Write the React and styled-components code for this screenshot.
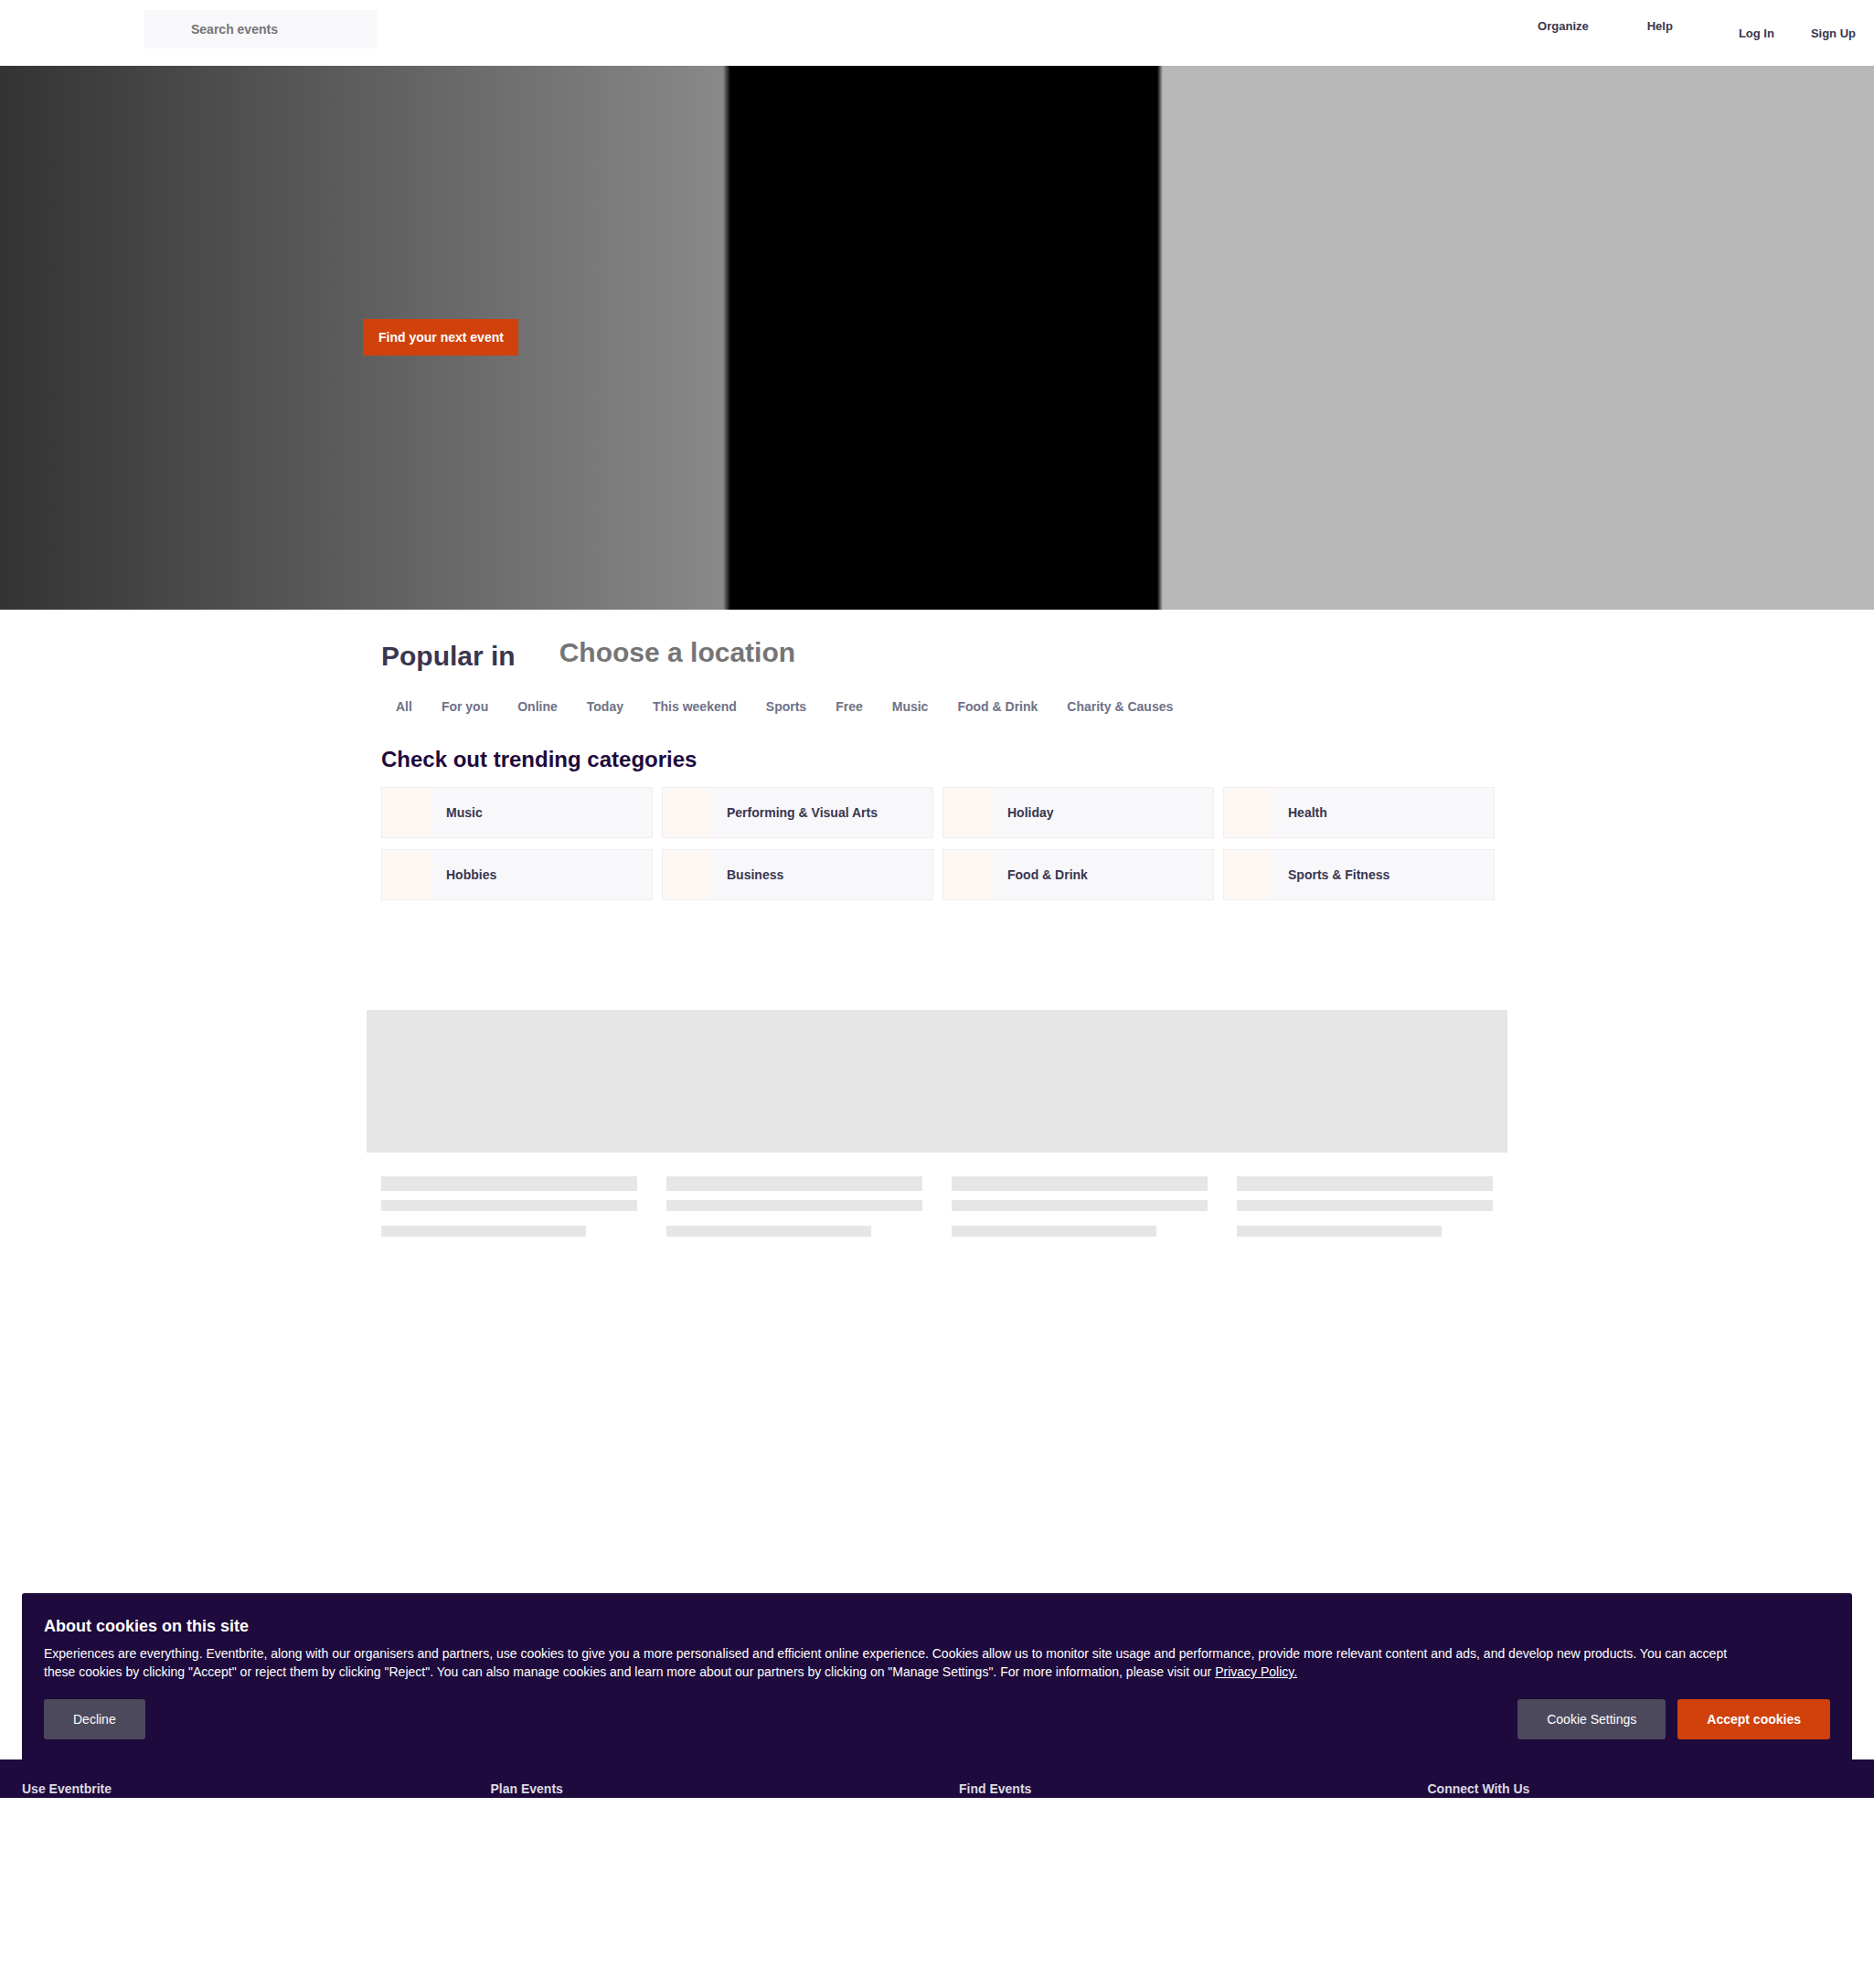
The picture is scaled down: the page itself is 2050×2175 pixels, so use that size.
import React from "react";
import styled, { createGlobalStyle } from "styled-components";

const GlobalStyle = createGlobalStyle`
  *, *::before, *::after { box-sizing: border-box; }
  body {
    margin: 0;
    background: #fff;
    color: #39364f;
    font-family: "Liberation Sans", Arial, sans-serif;
    font-size: 14px;
    line-height: 20px;
  }
  h1, h2, h3, p, ul { margin: 0; padding: 0; }
  ul { list-style: none; }
  a { color: inherit; text-decoration: none; }
  button, input { font: inherit; color: inherit; border: 0; border-radius: 0; }
`;

const Header = styled.header`
  display: flex;
  justify-content: space-between;
  align-items: flex-start;
  height: 72px;
  padding: 11px 20px 0 158px;
`;

const SearchInput = styled.input`
  width: 254px;
  height: 42px;
  padding: 0 16px 0 51px;
  background: #f8f7fa;
  font-weight: 700;
  &::placeholder { color: #757575; opacity: 1; }
`;

const Nav = styled.nav`
  display: flex;
  font-size: 13px;
  font-weight: 700;
`;

const NavGroup = styled.ul`
  display: flex;
  gap: ${(p) => p.$gap}px;
  && { padding: ${(p) => (p.$account ? "16px 0 0 72px" : "8px 0 0")}; }
`;

const Hero = styled.section`
  height: 595px;
  padding-top: 277px;
  background: linear-gradient(
    90deg,
    #333 0,
    #898989 791px,
    #000 799px,
    #000 1266px,
    #b8b8b8 1272px,
    #b8b8b8 100%
  );
`;

const Container = styled.div`
  width: 100%;
  max-width: 1248px;
  margin: 0 auto;
`;

const HeroInner = styled(Container)`
  max-width: 1256px;
`;

const HeroLink = styled.a`
  display: inline-flex;
  align-items: center;
  height: 40px;
  padding: 0 16px 0 17px;
  background: #d1410c;
  color: #fff;
  font-weight: 700;
`;

const Popular = styled(Container)`
  padding: 28px 14px 0 16px;
`;

const LocationRow = styled.div`
  display: flex;
  align-items: flex-start;
  gap: 48px;
  height: 56px;
  font-size: 30px;
  line-height: 38px;
  font-weight: 700;
`;

const LocationLabel = styled.label`
  padding-top: 4px;
`;

const LocationInput = styled.input`
  width: 320px;
  height: 38px;
  padding: 0;
  background: transparent;
  &::placeholder { color: #757575; opacity: 1; }
`;

const Tabs = styled.nav`
  display: flex;
  gap: 32px;
  padding: 12px 16px;
  color: #6f7287;
  font-weight: 700;
`;

const SectionTitle = styled.h2`
  && { margin-top: 20px; }
  color: #1e0a3c;
  font-size: 24px;
  line-height: 32px;
`;

const CategoryGrid = styled.div`
  display: grid;
  grid-template-columns: repeat(4, 1fr);
  gap: 12px 10px;
  margin-top: 14px;
`;

const CategoryCard = styled.a`
  display: flex;
  align-items: center;
  height: 56px;
  border: 1px solid #eeedf2;
  background: #f8f7fa;
  font-weight: 700;
`;

const CategoryThumb = styled.span`
  width: 54px;
  height: 100%;
  margin-right: 16px;
  background: #fef8f5;
`;

const Placeholder = styled(Container)`
  padding: 120px 0 390px;
`;

const Banner = styled.div`
  height: 156px;
  background: #e6e6e6;
`;

const SkeletonGrid = styled.div`
  display: grid;
  grid-template-columns: repeat(4, 1fr);
  margin-top: 26px;
`;

const SkeletonItem = styled.div`
  padding: 0 16px;
`;

const Bar = styled.div`
  width: ${(p) => (p.$short ? "80%" : "100%")};
  height: ${(p) => (p.$tall ? 16 : 12)}px;
  margin-top: ${(p) => p.$space || 0}px;
  background: #e6e6e6;
`;

const CookieBanner = styled.section`
  margin: 0 24px;
  padding: 24px 24px 22px;
  border-radius: 3px 3px 0 0;
  background: #1e0a3c;
  color: #fff;
`;

const CookieTitle = styled.h2`
  font-size: 18px;
  line-height: 24px;
`;

const CookieText = styled.p`
  max-width: 1860px;
  && { margin-top: 8px; }
`;

const PolicyLink = styled.a`
  && { text-decoration: underline; }
`;

const CookieActions = styled.div`
  display: flex;
  justify-content: space-between;
  margin-top: 20px;
`;

const ActionGroup = styled.div`
  display: flex;
  gap: 13px;
`;

const CookieButton = styled.button`
  height: 44px;
  padding: 0 32px;
  border-radius: 3px;
  background: ${(p) => (p.$primary ? "#d1410c" : "#4d495d")};
  color: #fff;
  font-weight: ${(p) => (p.$primary ? 700 : 400)};
`;

const Footer = styled.footer`
  display: grid;
  grid-template-columns: repeat(4, 1fr);
  height: 42px;
  padding-top: 22px;
  background: #1e0a3c;
  overflow: hidden;
`;

const FooterTitle = styled.h3`
  && { padding-left: 24px; }
  color: #dbdae3;
  font-size: 14px;
  line-height: 20px;
`;

const tabs = ["All", "For you", "Online", "Today", "This weekend", "Sports", "Free", "Music", "Food & Drink", "Charity & Causes"];
const categories = ["Music", "Performing & Visual Arts", "Holiday", "Health", "Hobbies", "Business", "Food & Drink", "Sports & Fitness"];
const footerTitles = ["Use Eventbrite", "Plan Events", "Find Events", "Connect With Us"];

export default function App() {
  return (
    <>
      <GlobalStyle />
      <Header>
        <SearchInput type="search" placeholder="Search events" aria-label="Search events" />
        <Nav>
          <NavGroup $gap={64}>
            <li><a href="#organize">Organize</a></li>
            <li><a href="#help">Help</a></li>
          </NavGroup>
          <NavGroup $gap={40} $account>
            <li><a href="#login">Log In</a></li>
            <li><a href="#signup">Sign Up</a></li>
          </NavGroup>
        </Nav>
      </Header>
      <main>
        <Hero>
          <HeroInner>
            <HeroLink href="#events">Find your next event</HeroLink>
          </HeroInner>
        </Hero>
        <Popular>
          <LocationRow>
            <LocationLabel htmlFor="location">Popular in</LocationLabel>
            <LocationInput id="location" type="text" placeholder="Choose a location" />
          </LocationRow>
          <Tabs>
            {tabs.map((t) => <a key={t} href="#events">{t}</a>)}
          </Tabs>
          <SectionTitle>Check out trending categories</SectionTitle>
          <CategoryGrid>
            {categories.map((c) => (
              <CategoryCard key={c} href="#category">
                <CategoryThumb />
                {c}
              </CategoryCard>
            ))}
          </CategoryGrid>
        </Popular>
        <Placeholder>
          <Banner />
          <SkeletonGrid>
            {[0, 1, 2, 3].map((i) => (
              <SkeletonItem key={i}>
                <Bar $tall />
                <Bar $space={10} />
                <Bar $space={16} $short />
              </SkeletonItem>
            ))}
          </SkeletonGrid>
        </Placeholder>
      </main>
      <CookieBanner>
        <CookieTitle>About cookies on this site</CookieTitle>
        <CookieText>
          Experiences are everything. Eventbrite, along with our organisers and partners, use cookies to give you a more
          personalised and efficient online experience. Cookies allow us to monitor site usage and performance, provide
          more relevant content and ads, and develop new products. You can accept these cookies by clicking "Accept" or
          reject them by clicking "Reject". You can also manage cookies and learn more about our partners by clicking on
          "Manage Settings". For more information, please visit our <PolicyLink href="#privacy">Privacy Policy.</PolicyLink>
        </CookieText>
        <CookieActions>
          <CookieButton type="button">Decline</CookieButton>
          <ActionGroup>
            <CookieButton type="button">Cookie Settings</CookieButton>
            <CookieButton type="button" $primary>Accept cookies</CookieButton>
          </ActionGroup>
        </CookieActions>
      </CookieBanner>
      <Footer>
        {footerTitles.map((t) => <FooterTitle key={t}>{t}</FooterTitle>)}
      </Footer>
    </>
  );
}
